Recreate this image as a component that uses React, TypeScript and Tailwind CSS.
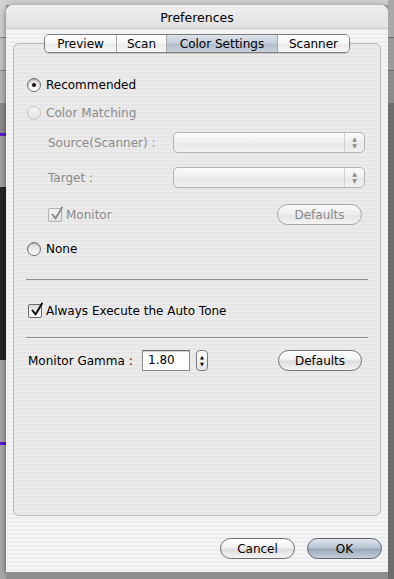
import React from "react";

const stripes =
  "bg-[repeating-linear-gradient(180deg,#ededed_0px,#ededed_2px,#f4f4f4_2px,#f4f4f4_4px)]";
const boxStripes =
  "bg-[repeating-linear-gradient(180deg,#e6e6e6_0px,#e6e6e6_2px,#ebebeb_2px,#ebebeb_4px)]";

function Radio({ checked, disabled }: { checked?: boolean; disabled?: boolean }) {
  return (
    <div
      className={`w-[14px] h-[14px] rounded-full border flex items-center justify-center shrink-0 ${
        disabled
          ? "border-[#c4c4c4] bg-[linear-gradient(180deg,#f4f4f4,#e4e4e4)]"
          : "border-[#6f6f6f] bg-[linear-gradient(180deg,#d8d8d8,#ffffff)] shadow-[inset_0_1px_1px_rgba(0,0,0,0.25)]"
      }`}
    >
      {checked && <div className="w-[4px] h-[4px] rounded-full bg-[#111]" />}
    </div>
  );
}

function Check({ disabled }: { disabled?: boolean }) {
  return (
    <div
      className={`w-[14px] h-[14px] rounded-[2px] border relative shrink-0 ${
        disabled
          ? "border-[#b0b0b0] bg-[linear-gradient(180deg,#f6f6f6,#e2e2e2)]"
          : "border-[#6a6a6a] bg-[linear-gradient(180deg,#dcdcdc,#ffffff)]"
      }`}
    >
      <svg
        className="absolute left-[1px] top-[-3px]"
        width="14"
        height="15"
        viewBox="0 0 14 15"
      >
        <path
          d="M2.5 8.5 L5.5 12.5 L12 1.5"
          fill="none"
          stroke={disabled ? "#8c8c8c" : "#111"}
          strokeWidth="2"
          strokeLinecap="round"
          strokeLinejoin="round"
        />
      </svg>
    </div>
  );
}

function Popup() {
  return (
    <div className="w-[192px] h-[21px] rounded-[5px] border border-[#b4b4b4] bg-[linear-gradient(180deg,#fbfbfb,#eeeeee_50%,#e6e6e6_51%,#f2f2f2)] flex justify-end">
      <div className="w-[20px] h-full border-l border-[#cfcfcf] flex flex-col items-center justify-center gap-[1px]">
        <span className="text-[6px] leading-[6px] text-[#8a8a8a]">▲</span>
        <span className="text-[6px] leading-[6px] text-[#8a8a8a]">▼</span>
      </div>
    </div>
  );
}

function PillButton({
  label,
  width,
  disabled,
  primary,
}: {
  label: string;
  width: string;
  disabled?: boolean;
  primary?: boolean;
}) {
  const base = "h-[21px] rounded-full border flex items-center justify-center text-[12px]";
  let tone = "";
  if (primary)
    tone =
      "border-[#5c6470] bg-[linear-gradient(180deg,#dfe5ec,#b8c3d0_48%,#9aa8ba_52%,#c4ced9)] text-black";
  else if (disabled)
    tone =
      "border-[#a6a6a6] bg-[linear-gradient(180deg,#fafafa,#ececec_50%,#e2e2e2_51%,#f3f3f3)] text-[#8a8a8a]";
  else
    tone =
      "border-[#707070] bg-[linear-gradient(180deg,#ffffff,#f0f0f0_48%,#dcdcdc_52%,#f4f4f4)] text-black";
  return <div className={`${base} ${tone} ${width}`}>{label}</div>;
}

function Tab({ label, width, selected, last }: { label: string; width: string; selected?: boolean; last?: boolean }) {
  return (
    <div
      className={`h-full flex items-center justify-center text-[12px] ${width} ${
        last ? "" : "border-r border-[#a8a8a8]"
      } ${
        selected
          ? "bg-[linear-gradient(180deg,#dde3ea,#c2ccd8_50%,#b0bccb_51%,#c8d1dc)]"
          : "bg-[linear-gradient(180deg,#ffffff,#f5f5f5_50%,#e9e9e9_51%,#f6f6f6)]"
      }`}
    >
      {label}
    </div>
  );
}

export default function App() {
  return (
    <div className="w-[394px] h-[579px] flex overflow-hidden font-['DejaVu_Sans',sans-serif] text-[12px] text-black bg-[#9a9a9a]">
      {/* left background strip */}
      <div className="w-[6px] flex flex-col shrink-0">
        <div className="h-[37px] bg-[#d2d2d2]" />
        <div className="h-[1px] bg-[#8a8a8a]" />
        <div className="h-[32px] bg-[#c4c4c4]" />
        <div className="h-[1px] bg-[#8a8a8a]" />
        <div className="h-[32px] bg-[#b4b4b4]" />
        <div className="h-[30px] bg-[#8c8c8c]" />
        <div className="h-[3px] bg-[#5a18d8]" />
        <div className="h-[51px] bg-[#a2a2a2]" />
        <div className="h-[173px] bg-[#262626]" />
        <div className="h-[82px] bg-[#a6a6a6]" />
        <div className="h-[3px] bg-[#5a18d8]" />
        <div className="flex-1 bg-[#a9a9a9]" />
      </div>

      {/* window column */}
      <div className="w-[382px] flex flex-col shrink-0">
        <div className="h-[5px] bg-[#cfcfcf]" />
        <div className={`h-[567px] rounded-t-[7px] flex flex-col ${stripes} shadow-[0_2px_6px_rgba(0,0,0,0.5)]`}>
          {/* title bar */}
          <div className="h-[24px] pt-[3px] rounded-t-[7px] flex items-center justify-center bg-[linear-gradient(180deg,#efefef,#e0e0e0)] border-b border-[#c9c9c9] text-[12.5px]">
            Preferences
          </div>

          {/* tabs */}
          <div className="mt-[5px] flex justify-center relative z-10">
            <div className="h-[19px] flex rounded-[5px] border border-[#7d7d7d] overflow-hidden shadow-[0_1px_1px_rgba(0,0,0,0.15)]">
              <Tab label="Preview" width="w-[72px]" />
              <Tab label="Scan" width="w-[50px]" />
              <Tab label="Color Settings" width="w-[111px]" selected />
              <Tab label="Scanner" width="w-[71px]" last />
            </div>
          </div>

          {/* group box */}
          <div
            className={`-mt-[10px] ml-[7px] w-[368px] h-[473px] rounded-[6px] border border-[#b9b9b9] ${boxStripes} flex flex-col pt-[33px]`}
          >
            <div className="h-[16px] flex items-center pl-[13px] gap-[5px]">
              <Radio checked />
              <span>Recommended</span>
            </div>
            <div className="mt-[12px] h-[16px] flex items-center pl-[13px] gap-[5px] text-[#8a8a8a]">
              <Radio disabled />
              <span>Color Matching</span>
            </div>
            <div className="mt-[11px] h-[21px] flex items-center pl-[34px] pr-[15px] text-[#8a8a8a]">
              <span className="flex-1">Source(Scanner) :</span>
              <Popup />
            </div>
            <div className="mt-[14px] h-[21px] flex items-center pl-[34px] pr-[15px] text-[#8a8a8a]">
              <span className="flex-1">Target :</span>
              <Popup />
            </div>
            <div className="mt-[16px] h-[21px] flex items-center pl-[34px] pr-[18px] text-[#8a8a8a]">
              <Check disabled />
              <span className="ml-[4px] flex-1">Monitor</span>
              <PillButton label="Defaults" width="w-[85px]" disabled />
            </div>
            <div className="mt-[16px] h-[16px] flex items-center pl-[13px] gap-[5px]">
              <Radio />
              <span>None</span>
            </div>
            <div className="mt-[22px] ml-[12px] w-[342px] h-[1px] bg-[#8e8e8e]" />
            <div className="mt-[23px] h-[16px] flex items-center pl-[14px] gap-[4px]">
              <Check />
              <span>Always Execute the Auto Tone</span>
            </div>
            <div className="mt-[18px] ml-[12px] w-[342px] h-[1px] bg-[#8e8e8e]" />
            <div className="mt-[12px] h-[21px] flex items-center pl-[14px] pr-[18px]">
              <span className="w-[114px]">Monitor Gamma :</span>
              <div className="w-[48px] h-[21px] bg-white border border-[#8a8a8a] border-t-[#6a6a6a] flex items-end pl-[5px] pb-[1px] shadow-[inset_0_1px_1px_rgba(0,0,0,0.2)]">
                1.80
              </div>
              <div className="ml-[6px] w-[12px] h-[21px] rounded-[4px] border border-[#7a7a7a] bg-[linear-gradient(180deg,#ffffff,#e4e4e4)] flex flex-col items-center justify-center gap-[2px]">
                <span className="text-[5px] leading-[5px] text-black">▲</span>
                <span className="text-[5px] leading-[5px] text-black">▼</span>
              </div>
              <div className="flex-1" />
              <PillButton label="Defaults" width="w-[84px]" />
            </div>
          </div>

          {/* bottom buttons */}
          <div className="mt-[22px] flex justify-end pr-[6px] gap-[12px]">
            <PillButton label="Cancel" width="w-[75px]" />
            <PillButton label="OK" width="w-[75px]" primary />
          </div>
        </div>
        <div className="flex-1 bg-[#8e8e8e]" />
      </div>

      {/* right background strip */}
      <div className="w-[6px] flex flex-col shrink-0">
        <div className="h-[37px] bg-[#a8a8a8]" />
        <div className="h-[1px] bg-[#6a6a6a]" />
        <div className="h-[32px] bg-[#9a9a9a]" />
        <div className="h-[1px] bg-[#6a6a6a]" />
        <div className="h-[32px] bg-[#8c8c8c]" />
        <div className="flex-1 bg-[#6e6e6e]" />
      </div>
    </div>
  );
}
